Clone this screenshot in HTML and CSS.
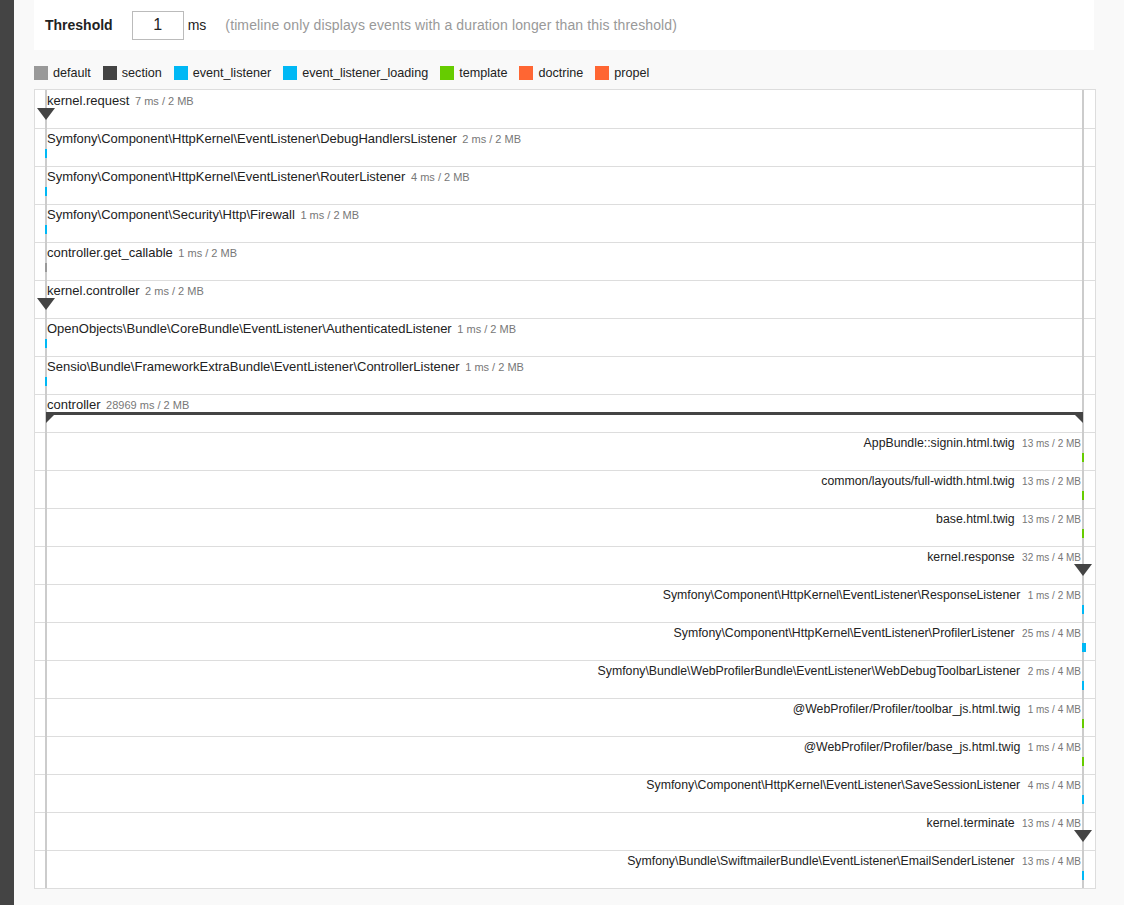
FILE: index.html
```html
<!DOCTYPE html>
<html lang="en">
<head>
  <meta charset="UTF-8" />
  <title>Timeline</title>
  <link rel="stylesheet" href="styles.css">
</head>
<body>
  <div class="page">
    <div class="sidebar"></div>
    <div class="main">
      <form class="threshold">
        <label for="threshold">Threshold</label>
        <input type="text" id="threshold" name="threshold" value="1" />
        <span class="unit">ms</span>
        <span class="help">(timeline only displays events with a duration longer than this threshold)</span>
      </form>

      <ul class="legend">
        <li><span class="swatch default"></span>default</li>
        <li><span class="swatch section"></span>section</li>
        <li><span class="swatch listener"></span>event_listener</li>
        <li><span class="swatch listener"></span>event_listener_loading</li>
        <li><span class="swatch template"></span>template</li>
        <li><span class="swatch doctrine"></span>doctrine</li>
        <li><span class="swatch doctrine"></span>propel</li>
      </ul>

      <div class="timeline">
        <div class="row"><div class="track">
          <div class="label">kernel.request <span class="dur">7 ms / 2 MB</span></div>
          <div class="mark" style="left: 0px"></div>
        </div></div>
        <div class="row"><div class="track">
          <div class="label">Symfony\Component\HttpKernel\EventListener\DebugHandlersListener <span class="dur">2 ms / 2 MB</span></div>
          <div class="bar listener" style="left: -1px; width: 2px"></div>
        </div></div>
        <div class="row"><div class="track">
          <div class="label">Symfony\Component\HttpKernel\EventListener\RouterListener <span class="dur">4 ms / 2 MB</span></div>
          <div class="bar listener" style="left: -1px; width: 2px"></div>
        </div></div>
        <div class="row"><div class="track">
          <div class="label">Symfony\Component\Security\Http\Firewall <span class="dur">1 ms / 2 MB</span></div>
          <div class="bar listener" style="left: -1px; width: 2px"></div>
        </div></div>
        <div class="row"><div class="track">
          <div class="label">controller.get_callable <span class="dur">1 ms / 2 MB</span></div>
          <div class="bar default" style="left: -1px; width: 2px"></div>
        </div></div>
        <div class="row"><div class="track">
          <div class="label">kernel.controller <span class="dur">2 ms / 2 MB</span></div>
          <div class="mark" style="left: 0px"></div>
        </div></div>
        <div class="row"><div class="track">
          <div class="label">OpenObjects\Bundle\CoreBundle\EventListener\AuthenticatedListener <span class="dur">1 ms / 2 MB</span></div>
          <div class="bar listener" style="left: -1px; width: 2px"></div>
        </div></div>
        <div class="row"><div class="track">
          <div class="label">Sensio\Bundle\FrameworkExtraBundle\EventListener\ControllerListener <span class="dur">1 ms / 2 MB</span></div>
          <div class="bar listener" style="left: -1px; width: 2px"></div>
        </div></div>
        <div class="row"><div class="track">
          <div class="label">controller <span class="dur">28969 ms / 2 MB</span></div>
          <div class="span" style="left: 0px; width: 1037px"></div>
        </div></div>
        <div class="row end"><div class="track">
          <div class="label">AppBundle::signin.html.twig <span class="dur">13 ms / 2 MB</span></div>
          <div class="bar template" style="left: 1036px; width: 2px"></div>
        </div></div>
        <div class="row end"><div class="track">
          <div class="label">common/layouts/full-width.html.twig <span class="dur">13 ms / 2 MB</span></div>
          <div class="bar template" style="left: 1036px; width: 2px"></div>
        </div></div>
        <div class="row end"><div class="track">
          <div class="label">base.html.twig <span class="dur">13 ms / 2 MB</span></div>
          <div class="bar template" style="left: 1036px; width: 2px"></div>
        </div></div>
        <div class="row end"><div class="track">
          <div class="label">kernel.response <span class="dur">32 ms / 4 MB</span></div>
          <div class="mark" style="left: 1037px"></div>
        </div></div>
        <div class="row end"><div class="track">
          <div class="label">Symfony\Component\HttpKernel\EventListener\ResponseListener <span class="dur">1 ms / 2 MB</span></div>
          <div class="bar listener" style="left: 1036px; width: 2px"></div>
        </div></div>
        <div class="row end"><div class="track">
          <div class="label">Symfony\Component\HttpKernel\EventListener\ProfilerListener <span class="dur">25 ms / 4 MB</span></div>
          <div class="bar listener" style="left: 1036px; width: 4px"></div>
        </div></div>
        <div class="row end"><div class="track">
          <div class="label">Symfony\Bundle\WebProfilerBundle\EventListener\WebDebugToolbarListener <span class="dur">2 ms / 4 MB</span></div>
          <div class="bar listener" style="left: 1036px; width: 2px"></div>
        </div></div>
        <div class="row end"><div class="track">
          <div class="label">@WebProfiler/Profiler/toolbar_js.html.twig <span class="dur">1 ms / 4 MB</span></div>
          <div class="bar template" style="left: 1036px; width: 2px"></div>
        </div></div>
        <div class="row end"><div class="track">
          <div class="label">@WebProfiler/Profiler/base_js.html.twig <span class="dur">1 ms / 4 MB</span></div>
          <div class="bar template" style="left: 1036px; width: 2px"></div>
        </div></div>
        <div class="row end"><div class="track">
          <div class="label">Symfony\Component\HttpKernel\EventListener\SaveSessionListener <span class="dur">4 ms / 4 MB</span></div>
          <div class="bar listener" style="left: 1036px; width: 2px"></div>
        </div></div>
        <div class="row end"><div class="track">
          <div class="label">kernel.terminate <span class="dur">13 ms / 4 MB</span></div>
          <div class="mark" style="left: 1037px"></div>
        </div></div>
        <div class="row end"><div class="track">
          <div class="label">Symfony\Bundle\SwiftmailerBundle\EventListener\EmailSenderListener <span class="dur">13 ms / 4 MB</span></div>
          <div class="bar listener" style="left: 1036px; width: 2px"></div>
        </div></div>
      </div>
    </div>
  </div>
</body>
</html>
```

FILE: styles.css
```css
body {
  margin: 0;
  background-color: #f9f9f9;
  font-family: "Liberation Sans", Arial, sans-serif;
  color: #222;
}
.page {
  display: flex;
  min-height: 905px;
}
.sidebar {
  width: 14px;
  flex-shrink: 0;
  background-color: #444;
}
.main {
  padding-left: 20px;
  width: 1062px;
}

/* threshold form */
.threshold {
  display: flex;
  align-items: center;
  height: 50px;
  width: 1060px;
  box-sizing: border-box;
  padding: 0 11px;
  background-color: #fff;
  font-size: 14px;
}
.threshold label {
  font-weight: bold;
  margin-right: 19px;
}
.threshold input {
  width: 52px;
  height: 29px;
  box-sizing: border-box;
  border: 1px solid #bbb;
  padding: 0;
  font-family: inherit;
  font-size: 16px;
  color: #222;
  text-align: center;
}
.threshold .unit {
  margin-left: 4px;
}
.threshold .help {
  margin-left: 19px;
  color: #999;
  letter-spacing: 0.12px;
}

/* legend */
.legend {
  list-style: none;
  display: flex;
  gap: 12px;
  margin: 16px 0 9px;
  padding: 0;
  font-size: 12.6px;
  line-height: 14px;
}
.legend li {
  display: flex;
  align-items: center;
}
.swatch {
  width: 14px;
  height: 14px;
  margin-right: 5px;
}
.default { background-color: #999; }
.section { background-color: #444; }
.listener { background-color: #00b8f5; }
.template { background-color: #66cc00; }
.doctrine { background-color: #ff6633; }

/* timeline */
.timeline {
  position: relative;
  width: 1062px;
  box-sizing: border-box;
  padding-top: 1px;
  background-color: #fff;
  border: 1px solid #ddd;
}
.timeline::before {
  content: "";
  position: absolute;
  top: 0;
  bottom: 0;
  left: 10px;
  right: 11px;
  border-left: 2px solid #ccc;
  border-right: 2px solid #ccc;
}
.row {
  height: 37px;
  border-bottom: 1px solid #ddd;
}
.row:last-child {
  border-bottom: none;
}
.track {
  position: relative;
  margin-left: 11px;
  width: 1037px;
  height: 37px;
  padding-top: 2px;
  box-sizing: border-box;
}
.label {
  font-size: 13px;
  line-height: 15px;
  color: #222;
  white-space: nowrap;
  padding-left: 1px;
}
.dur {
  font-size: 11px;
  color: #777;
  margin-left: 2px;
}
.row.end .label {
  text-align: right;
  font-size: 12.3px;
  padding: 1px 2px 0 0;
}
.row.end .dur {
  font-size: 10px;
  margin-left: 4px;
}
.bar {
  position: absolute;
  top: 20px;
  height: 9px;
}
.mark {
  position: absolute;
  top: 17px;
  margin-left: -9px;
  width: 0;
  height: 0;
  border-left: 9px solid transparent;
  border-right: 9px solid transparent;
  border-top: 12px solid #444;
}
.span {
  position: absolute;
  top: 17px;
  height: 3px;
  background-color: #444;
}
.span::before,
.span::after {
  content: "";
  position: absolute;
  top: 3px;
  width: 0;
  height: 0;
  border-top: 8px solid #444;
}
.span::before {
  left: 0;
  border-right: 8px solid transparent;
}
.span::after {
  right: 0;
  border-left: 8px solid transparent;
}
```
